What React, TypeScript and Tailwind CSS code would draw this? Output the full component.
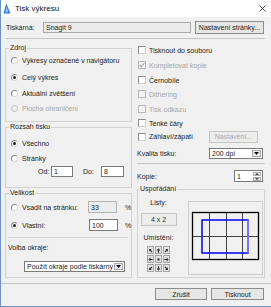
import React from "react";

function Radio({ checked, disabled }: { checked?: boolean; disabled?: boolean }) {
  return (
    <span
      className={`w-[7px] h-[7px] rounded-full border flex items-center justify-center shrink-0 ${
        disabled ? "border-[#bcbcbc] bg-[#f0f0f0]" : "border-[#8a8a8a] border-r-[#dadada] border-b-[#dadada] bg-white"
      }`}
    >
      {checked && <span className="w-[3px] h-[3px] rounded-full bg-[#222]" />}
    </span>
  );
}

function Check({ checked, disabled }: { checked?: boolean; disabled?: boolean }) {
  return (
    <span
      className={`w-[8px] h-[8px] border flex items-center justify-center shrink-0 ${
        disabled ? "border-[#b8b8b8] bg-[#f4f4f4]" : "border-[#8a8a8a] border-r-[#cfcfcf] border-b-[#cfcfcf] bg-white"
      }`}
    >
      {checked && (
        <svg width="6" height="6" viewBox="0 0 6 6">
          <path d="M0.6 3 L2.3 4.7 L5.4 1" fill="none" stroke={disabled ? "#a0a0a0" : "#000"} strokeWidth="1.1" />
        </svg>
      )}
    </span>
  );
}

function RadioRow({ label, checked, disabled, className }: { label: string; checked?: boolean; disabled?: boolean; className: string }) {
  return (
    <div className={`h-[10px] flex items-center pl-[5px] ${className}`}>
      <Radio checked={checked} disabled={disabled} />
      <span className={`ml-[4px] ${disabled ? "text-[#a6a6a6]" : ""}`}>{label}</span>
    </div>
  );
}

function CheckRow({ label, checked, disabled, className }: { label: string; checked?: boolean; disabled?: boolean; className: string }) {
  return (
    <div className={`h-[10px] flex items-center pl-[1px] ${className}`}>
      <Check checked={checked} disabled={disabled} />
      <span className={`ml-[3px] ${disabled ? "text-[#a6a6a6]" : ""}`}>{label}</span>
    </div>
  );
}

function DownArrow({ color = "#000" }: { color?: string }) {
  return (
    <svg width="5" height="3" viewBox="0 0 5 3">
      <path d="M0 0 H5 L2.5 3 Z" fill={color} />
    </svg>
  );
}

function Select({ text, className }: { text: string; className: string }) {
  return (
    <div className={`h-[11px] border border-[#7a7a7a] bg-white flex ${className}`}>
      <span className="flex-1 pl-[2px] flex items-center">{text}</span>
      <span className="w-[9px] m-[1px] border border-[#a8a8a8] bg-[#ececec] flex items-center justify-center">
        <DownArrow />
      </span>
    </div>
  );
}

function Button({ label, disabled, className }: { label: string; disabled?: boolean; className: string }) {
  return (
    <div
      className={`border flex items-center justify-center ${
        disabled ? "border-[#c4c4c4] bg-[#ececec] text-[#a8a8a8]" : "border-[#8c8c8c] bg-[#e6e6e6]"
      } ${className}`}
    >
      {label}
    </div>
  );
}

function PlaceArrow({ angle }: { angle: number | null }) {
  return (
    <div className="w-[7px] h-[8px] border border-[#a4a4a4] bg-[#e4e4e4] flex items-center justify-center">
      <svg width="5" height="5" viewBox="0 0 5 5">
        {angle === null ? (
          <rect x="1.5" y="1.5" width="2" height="2" fill="#222" />
        ) : (
          <g transform={`rotate(${angle} 2.5 2.5)`}>
            <path d="M2.5 0.3 L4.4 2.4 H3.1 V4.7 H1.9 V2.4 H0.6 Z" fill="#333" />
          </g>
        )}
      </svg>
    </div>
  );
}

export default function App() {
  const arrows = [-45, 0, 45, -90, null, 90, -135, 180, 135];

  return (
    <div className="w-[271px] h-[307px] bg-[#f0f0f0] border-l border-b border-[#6b93c8] flex flex-col overflow-hidden font-['Liberation_Sans',Arial,sans-serif] text-[7px] leading-[9px] text-[#1c1c1c]">
      {/* title bar */}
      <div className="h-[17px] shrink-0 bg-white flex items-center pl-[2px] pr-[5px]">
        <svg width="8" height="11" viewBox="0 0 8 11">
          <path d="M3.2 0.5 L0.5 10.5 H7.5 Z" fill="#2f74d0" />
          <path d="M3.4 3.5 L2.2 9.3 H5.6 Z" fill="#9cc4f0" />
        </svg>
        <span className="ml-[4px] text-[8px] text-[#111]">Tisk výkresu</span>
        <svg className="ml-auto" width="7" height="7" viewBox="0 0 7 7">
          <path d="M0.5 0.5 L6.5 6.5 M6.5 0.5 L0.5 6.5" stroke="#333" strokeWidth="0.9" />
        </svg>
      </div>

      {/* printer row */}
      <div className="mt-[4px] h-[13px] flex items-center pl-[5px]">
        <span className="w-[37px]">Tiskárna:</span>
        <div className="w-[148px] h-[11px] border border-[#a9a9a9] bg-[#ebebeb] flex items-center pl-[2px]">Snagit 9</div>
        <Button label="Nastavení stránky..." className="ml-[4px] w-[69px] h-[13px]" />
      </div>

      <div className="mt-[4px] ml-[5px] w-[259px] h-px bg-[#c6c6c6]" />

      {/* main */}
      <div className="flex pl-[4px]">
        {/* left column */}
        <div className="w-[127px] flex flex-col">
          <fieldset className="mt-[4px] h-[79px] border border-[#d2d2d2] flex flex-col">
            <legend className="ml-[3px] px-[1px] leading-[10px]">Zdroj</legend>
            <RadioRow className="mt-[2px]" label="Výkresy označené v navigátoru" />
            <RadioRow className="mt-[7px]" label="Celý výkres" checked />
            <RadioRow className="mt-[6px]" label="Aktuální zvětšení" />
            <RadioRow className="mt-[5px]" label="Plocha ohraničení" disabled />
          </fieldset>

          <fieldset className="h-[66px] border border-[#d2d2d2] flex flex-col">
            <legend className="ml-[3px] px-[1px] leading-[10px]">Rozsah tisku</legend>
            <RadioRow className="mt-[6px]" label="Všechno" checked />
            <RadioRow className="mt-[5px]" label="Stránky" />
            <div className="mt-[3px] h-[11px] flex items-center pl-[32px]">
              <span className="w-[13px]">Od:</span>
              <div className="w-[22px] h-[11px] border border-[#7a7a7a] bg-white pl-[2px] flex items-center">1</div>
              <span className="ml-[10px] w-[18px]">Do:</span>
              <div className="w-[23px] h-[11px] border border-[#7a7a7a] bg-white pl-[2px] flex items-center">8</div>
            </div>
          </fieldset>

          <fieldset className="h-[90px] border border-[#d2d2d2] flex flex-col">
            <legend className="ml-[3px] px-[1px] leading-[10px]">Velikost</legend>
            <div className="mt-[3px] h-[12px] flex items-center pl-[5px]">
              <Radio />
              <span className="ml-[4px] w-[62px]">Vsadit na stránku:</span>
              <div className="ml-[4px] w-[29px] h-[12px] border border-[#b4b4b4] bg-[#ececec] pl-[2px] flex items-center">33</div>
              <span className="ml-[8px]">%</span>
            </div>
            <div className="mt-[6px] h-[12px] flex items-center pl-[5px]">
              <Radio checked />
              <span className="ml-[4px] w-[63px]">Vlastní:</span>
              <div className="ml-[4px] w-[29px] h-[12px] border border-[#7a7a7a] bg-white pl-[2px] flex items-center">100</div>
              <span className="ml-[7px]">%</span>
            </div>
            <div className="mt-[6px] ml-[2px] mr-[3px] h-px bg-[#d2d2d2]" />
            <div className="mt-[5px] h-[9px] flex items-center pl-[2px]">Volba okraje:</div>
            <Select text="Použít okraje podle tiskárny" className="mt-[9px] ml-[18px] w-[101px]" />
          </fieldset>
        </div>

        {/* right column */}
        <div className="ml-[5px] w-[128px] flex flex-col">
          <CheckRow className="mt-[6px]" label="Tisknout do souboru" />
          <CheckRow className="mt-[5px]" label="Kompletovat kopie" checked disabled />
          <CheckRow className="mt-[5px]" label="Černobíle" />
          <CheckRow className="mt-[4px]" label="Dithering" disabled />
          <CheckRow className="mt-[5px]" label="Tisk odkazu" disabled />
          <CheckRow className="mt-[4px]" label="Tenké čáry" />
          <div className="mt-[2px] h-[13px] flex items-center pl-[1px]">
            <Check />
            <span className="ml-[3px]">Záhlaví/zápatí</span>
            <Button label="Nastavení..." disabled className="ml-auto mr-[7px] w-[49px] h-[12px]" />
          </div>
          <div className="mt-[5px] h-[11px] flex items-center">
            <span>Kvalita tisku:</span>
            <Select text="200 dpi" className="ml-auto mr-[2px] w-[54px]" />
          </div>
          <div className="mt-[4px] h-px bg-[#c6c6c6]" />
          <div className="mt-[6px] h-[12px] flex items-center">
            <span>Kopie:</span>
            <div className="ml-auto mr-[2px] w-[29px] h-[12px] border border-[#7a7a7a] bg-white flex">
              <span className="flex-1 pl-[2px] flex items-center">1</span>
              <span className="w-[8px] m-[1px] flex flex-col gap-px">
                <span className="flex-1 bg-[#e6e6e6] border border-[#b0b0b0] flex items-center justify-center">
                  <svg width="4" height="2" viewBox="0 0 4 2"><path d="M0 2 H4 L2 0 Z" fill="#444" /></svg>
                </span>
                <span className="flex-1 bg-[#e6e6e6] border border-[#b0b0b0] flex items-center justify-center">
                  <svg width="4" height="2" viewBox="0 0 4 2"><path d="M0 0 H4 L2 2 Z" fill="#444" /></svg>
                </span>
              </span>
            </div>
          </div>

          <fieldset className="mt-[2px] h-[94px] border border-[#d2d2d2] flex">
            <legend className="ml-[1px] px-[1px] leading-[10px]">Uspořádání</legend>
            <div className="ml-[2px] w-[37px] flex flex-col items-center">
              <div className="mt-[4px] h-[9px] flex items-center">Listy:</div>
              <div className="mt-[6px] w-[36px] h-[13px] border border-[#c4c4c4] bg-[#ececec] flex items-center justify-center text-[#333]">
                4 x 2
              </div>
              <div className="mt-[7px] h-[9px] flex items-center">Umístění:</div>
              <div className="mt-[4px] grid grid-cols-3 gap-px">
                {arrows.map((a, i) => (
                  <PlaceArrow key={i} angle={a} />
                ))}
              </div>
            </div>
            <div className="ml-[11px] mt-[7px] w-[75px] h-[74px] border border-[#cdcdcd] bg-[#f0f0f0]">
              <svg width="73" height="72" viewBox="0 0 73 72">
                <g stroke="#444" strokeWidth="1">
                  <line x1="20.5" y1="10" x2="20.5" y2="58" />
                  <line x1="37.5" y1="10" x2="37.5" y2="58" />
                  <line x1="53.5" y1="10" x2="53.5" y2="58" />
                  <line x1="3" y1="34.5" x2="70" y2="34.5" />
                </g>
                <rect x="3.5" y="10.5" width="66" height="47" fill="none" stroke="#000" strokeWidth="1.3" />
                <rect x="13" y="18" width="46" height="33" fill="none" stroke="#1010f0" strokeWidth="1.6" />
                <line x1="59" y1="18" x2="59" y2="51" stroke="#8080ff" strokeWidth="1.6" />
              </svg>
            </div>
          </fieldset>
        </div>
      </div>

      <div className="mt-[5px] h-px bg-[#c6c6c6]" />

      <div className="mt-[4px] h-[12px] flex justify-end gap-[4px] pr-[7px]">
        <Button label="Zrušit" className="w-[52px] h-[12px]" />
        <Button label="Tisknout" className="w-[53px] h-[12px]" />
      </div>
    </div>
  );
}
